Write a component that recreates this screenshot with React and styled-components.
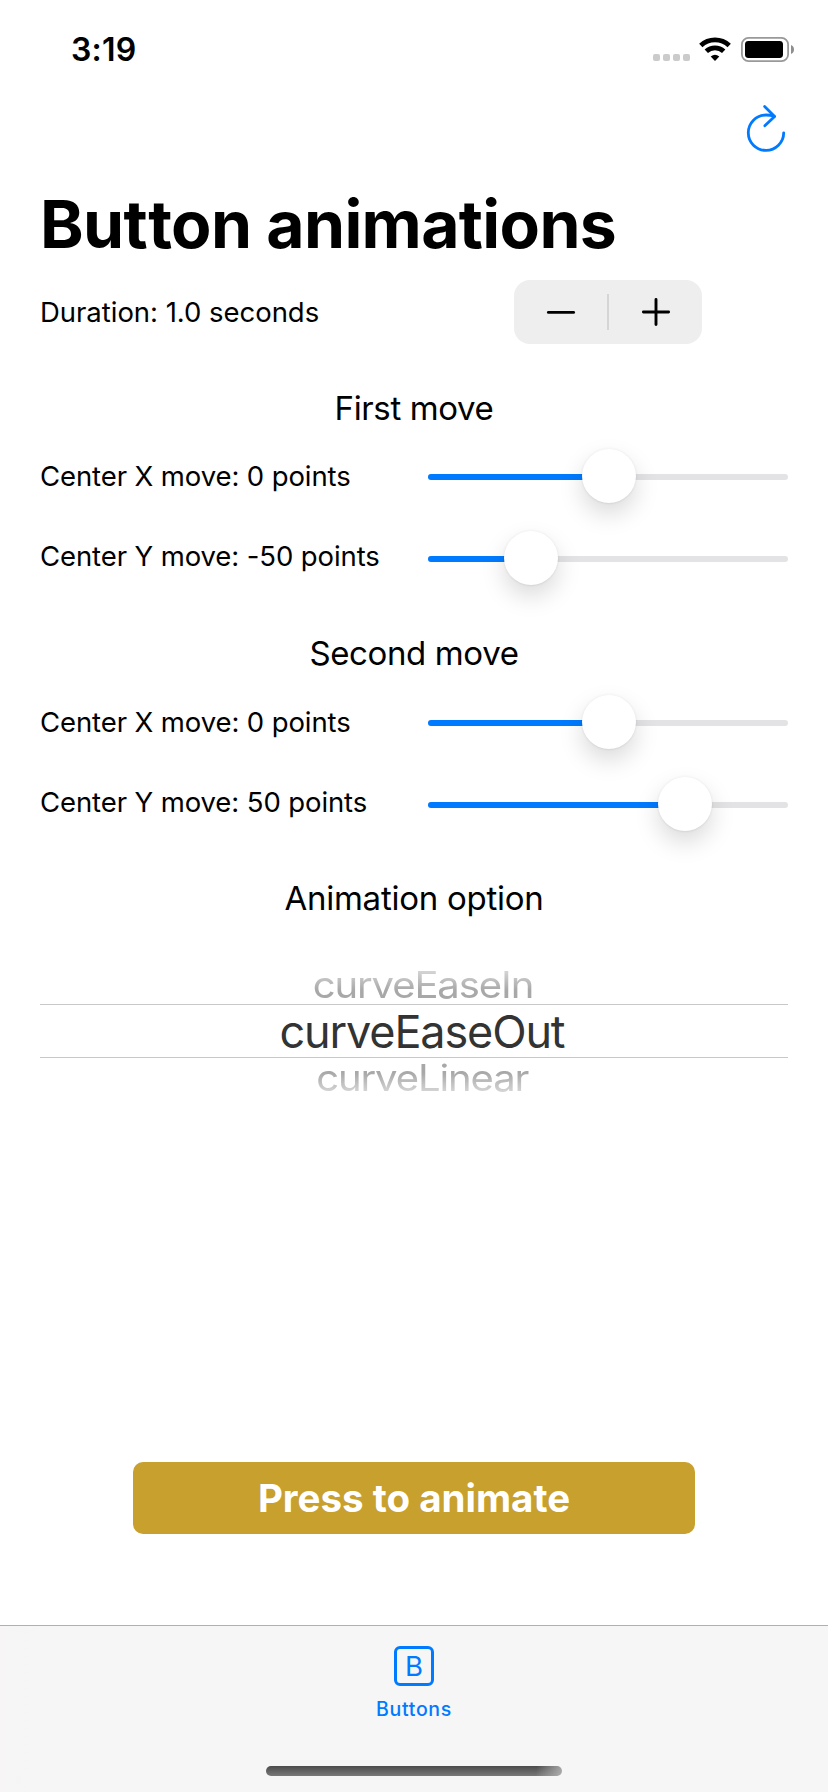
import React from "react";
import styled, { createGlobalStyle } from "styled-components";

const GlobalStyle = createGlobalStyle`
  * { box-sizing: border-box; }
  body { margin: 0; background: #fff; }
`;

const Screen = styled.div`
  display: flex;
  flex-direction: column;
  width: 828px;
  height: 1792px;
  overflow: hidden;
  background: #fff;
  color: #000;
  font-family: Inter, "Liberation Sans", sans-serif;
  white-space: nowrap;
`;

const StatusBar = styled.header`
  display: flex;
  justify-content: space-between;
  height: 88px;
  padding: 0 34px 0 71px;
`;

const Clock = styled.time`
  margin-top: 30px;
  height: 40px;
  line-height: 40px;
  font-size: 32px;
  font-weight: 600;
  letter-spacing: 0.2px;
`;

const StatusIcons = styled.div`
  display: flex;
  align-items: flex-start;
  padding-top: 37px;
`;

const CellDots = styled.div`
  display: flex;
  gap: 3px;
  margin: 17px 9px 0 0;
`;

const CellDot = styled.span`
  width: 7px;
  height: 7px;
  border-radius: 2px;
  background: #cbcbcb;
`;

const WifiIcon = styled.svg`
  width: 33px;
  height: 25px;
  margin-right: 9px;
`;

const BatteryIcon = styled.svg`
  width: 53px;
  height: 25px;
`;

const NavBar = styled.nav`
  display: flex;
  justify-content: flex-end;
  height: 96px;
  padding: 16px 40px 0 0;
`;

const IconButton = styled.button`
  display: flex;
  width: 44px;
  height: 52px;
  padding: 0;
  border: 0;
  background: none;
  color: #007aff;
`;

const Content = styled.main`
  display: flex;
  flex-direction: column;
  flex: 1;
  padding: 0 40px;
`;

const Title = styled.h1`
  margin: 0;
  height: 80px;
  line-height: 80px;
  font-size: 66px;
  font-weight: 700;
  letter-spacing: -0.66px;
`;

const LooseLetter = styled.span`
  letter-spacing: 0.6px;
`;

const DurationRow = styled.div`
  display: flex;
  align-items: center;
  justify-content: space-between;
  height: 64px;
  margin: 16px 86px 44px 0;
`;

const Label = styled.span`
  font-size: 27.5px;
  line-height: 60px;
  letter-spacing: ${(p) => p.$tracking || "-0.1px"};
`;

const Stepper = styled.div`
  display: grid;
  grid-template-columns: 1fr 2px 1fr;
  align-items: center;
  justify-items: center;
  width: 188px;
  height: 64px;
  border-radius: 16px;
  background: #eeeeee;
`;

const StepButton = styled.button`
  display: flex;
  padding: 0;
  border: 0;
  background: none;
  color: #000;
`;

const StepDivider = styled.span`
  width: 2px;
  height: 36px;
  background: #d5d5d6;
`;

const Group = styled.section`
  display: flex;
  flex-direction: column;
  height: 245px;
`;

const Heading = styled.h2`
  margin: 0;
  height: 40px;
  line-height: 40px;
  text-align: center;
  font-size: 33px;
  font-weight: 400;
  letter-spacing: ${(p) => p.$tracking || "-0.38px"};
`;

const Rows = styled.div`
  display: flex;
  flex-direction: column;
  gap: 20px;
  padding-top: ${(p) => p.$top}px;
`;

const SliderRow = styled.div`
  display: flex;
  justify-content: space-between;
  height: 60px;
`;

const Slider = styled.div`
  display: grid;
  align-items: center;
  width: 360px;
  height: 60px;
  margin-top: ${(p) => p.$drop}px;
`;

const Track = styled.div`
  grid-area: 1 / 1;
  display: flex;
  height: 6px;
  margin-top: 2px;
  border-radius: 3px;
  background: #e3e3e5;
  overflow: hidden;
`;

const TrackFill = styled.div`
  background: #007aff;
`;

const Thumb = styled.div`
  grid-area: 1 / 1;
  z-index: 1;
  width: 54px;
  height: 54px;
  border-radius: 50%;
  background: #fff;
  box-shadow: 0 0 3px rgba(0, 0, 0, 0.07), 0 1px 2px rgba(0, 0, 0, 0.03),
    0 11px 25px rgba(0, 0, 0, 0.15);
`;

const Picker = styled.div`
  display: flex;
  flex-direction: column;
  align-items: stretch;
  padding-top: 46px;
  color: #333;
`;

const PickerSide = styled.div`
  display: flex;
  justify-content: center;
  height: 40px;
  padding-left: 17px;
`;

const PickerSideText = styled.span`
  height: 54px;
  line-height: 54px;
  font-size: 45px;
  letter-spacing: -1.25px;
  color: #a8a8a8;
  transform: translateY(${(p) => p.$shift}px) scale(0.89, 0.82);
  -webkit-mask-image: linear-gradient(
    ${(p) => p.$fade},
    rgba(0, 0, 0, 0.5) 20%,
    #000 62%
  );
`;

const PickerSelected = styled.div`
  height: 54px;
  padding-left: 16px;
  border-top: 1px solid #c8c8c8;
  border-bottom: 1px solid #c8c8c8;
  text-align: center;
  line-height: 53px;
  font-size: 45px;
  letter-spacing: -1.15px;
`;

const ActionButton = styled.button`
  width: 562px;
  height: 72px;
  margin: auto auto 91px;
  padding: 0;
  border: 0;
  border-radius: 10px;
  background: #c8a02d;
  color: #fff;
  font-family: inherit;
  font-size: 38.5px;
  font-weight: 700;
  line-height: 72px;
`;

const TabBar = styled.footer`
  display: flex;
  flex-direction: column;
  align-items: center;
  height: 167px;
  border-top: 1px solid #b0b0b1;
  background: linear-gradient(90deg, #f7f5f6 0, #f6f6f6 40px, #f6f6f6 100%);
`;

const TabItem = styled.a`
  display: flex;
  flex-direction: column;
  align-items: center;
  padding-top: 20px;
  color: #007aff;
`;

const TabGlyph = styled.span`
  width: 40px;
  height: 40px;
  border: 3px solid #007aff;
  border-radius: 6px;
  text-align: center;
  line-height: 34px;
  font-size: 27.5px;
`;

const TabLabel = styled.span`
  height: 24px;
  margin-top: 11px;
  line-height: 24px;
  font-size: 19.5px;
  font-weight: 500;
  letter-spacing: 0.7px;
`;

const HomeIndicator = styled.div`
  width: 296px;
  height: 10px;
  margin-top: 45px;
  border-radius: 5px;
  background: linear-gradient(
      100deg,
      rgba(180, 180, 180, 0) 91%,
      rgba(180, 180, 180, 0.9) 100%
    ),
    linear-gradient(#4b4b4b, #787878);
`;

function SliderLine({ label, value, drop = 0 }) {
  return (
    <SliderRow>
      <Label>{label}</Label>
      <Slider $drop={drop}>
        <Track>
          <TrackFill style={{ width: value + 27 }} />
        </Track>
        <Thumb style={{ marginLeft: value }} />
      </Slider>
    </SliderRow>
  );
}

export default function App() {
  return (
    <>
      <GlobalStyle />
      <Screen>
        <StatusBar>
          <Clock>3:19</Clock>
          <StatusIcons>
            <CellDots>
              <CellDot />
              <CellDot />
              <CellDot />
              <CellDot />
            </CellDots>
            <WifiIcon viewBox="0 0 33 25" fill="none" stroke="#000">
              <path d="M1.8 8.6 A20.5 20.5 0 0 1 30.2 8.6" strokeWidth="4.8" />
              <path d="M7.3 14.3 A12.5 12.5 0 0 1 24.7 14.3" strokeWidth="4.8" />
              <path
                d="M11.7 19.6 A6.7 6.7 0 0 1 20.3 19.6 L16 24 Z"
                fill="#000"
                stroke="none"
              />
            </WifiIcon>
            <BatteryIcon viewBox="0 0 53 25">
              <rect
                x="0.9"
                y="0.9"
                width="46.2"
                height="23.2"
                rx="6.6"
                fill="none"
                stroke="#999"
                strokeWidth="1.8"
              />
              <rect x="4" y="4" width="38" height="17" rx="3.4" fill="#000" />
              <path d="M50 8 Q53 9.3 53 12.5 Q53 15.7 50 17 Z" fill="#8e8e8e" />
            </BatteryIcon>
          </StatusIcons>
        </StatusBar>

        <NavBar>
          <IconButton aria-label="Reset">
            <svg
              width="44"
              height="52"
              viewBox="744 104 44 52"
              fill="none"
              stroke="currentColor"
              strokeWidth="2.8"
              strokeLinecap="round"
              strokeLinejoin="round"
            >
              <path d="M783.7 132.8 A17.7 17.7 0 1 1 766 115 Q770.5 115 774.3 116.4" />
              <path d="M764.6 106.6 L774.6 116.4 L764.8 125.8" />
            </svg>
          </IconButton>
        </NavBar>

        <Content>
          <Title>
            Bu<LooseLetter>t</LooseLetter>ton animations
          </Title>
          <DurationRow>
            <Label $tracking="-0.03px">Duration: 1.0 seconds</Label>
            <Stepper>
              <StepButton aria-label="Decrease">
                <svg width="32" height="32" stroke="#000" strokeLinecap="round">
                  <path d="M3.4 16.4 H28.6" strokeWidth="2.9" />
                </svg>
              </StepButton>
              <StepDivider />
              <StepButton aria-label="Increase">
                <svg width="32" height="32" stroke="#000" strokeLinecap="round">
                  <path d="M3.4 16 H28.6 M16 3.4 V28.6" strokeWidth="2.9" />
                </svg>
              </StepButton>
            </Stepper>
          </DurationRow>

          <Group>
            <Heading>First move</Heading>
            <Rows $top={18}>
              <SliderLine label="Center X move: 0 points" value={154} />
              <SliderLine label="Center Y move: -50 points" value={76} drop={2} />
            </Rows>
          </Group>

          <Group>
            <Heading>Second move</Heading>
            <Rows $top={19}>
              <SliderLine label="Center X move: 0 points" value={154} />
              <SliderLine label="Center Y move: 50 points" value={230} drop={2} />
            </Rows>
          </Group>

          <Heading $tracking="-0.25px">Animation option</Heading>

          <Picker>
            <PickerSide>
              <PickerSideText $shift={-6} $fade="to bottom">
                curveEaseIn
              </PickerSideText>
            </PickerSide>
            <PickerSelected>curveEaseOut</PickerSelected>
            <PickerSide>
              <PickerSideText $shift={-7} $fade="to top">
                curveLinear
              </PickerSideText>
            </PickerSide>
          </Picker>

          <ActionButton>Press to animate</ActionButton>
        </Content>

        <TabBar>
          <TabItem>
            <TabGlyph>B</TabGlyph>
            <TabLabel>Buttons</TabLabel>
          </TabItem>
          <HomeIndicator />
        </TabBar>
      </Screen>
    </>
  );
}
